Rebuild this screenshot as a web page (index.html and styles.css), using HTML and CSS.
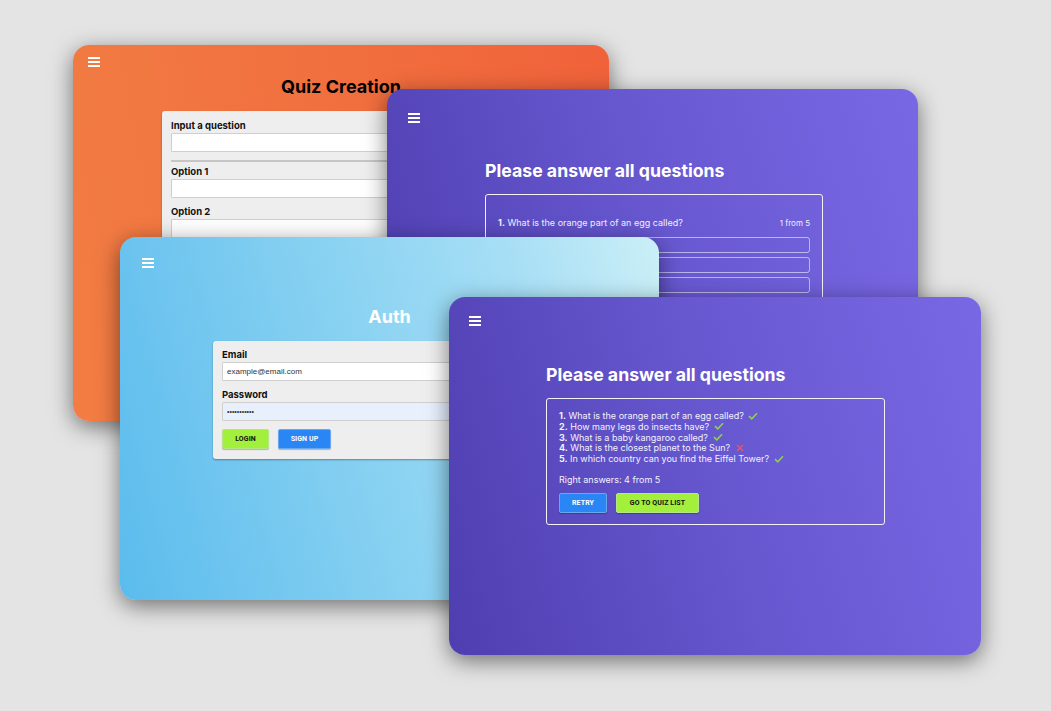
FILE: index.html
```html
<!DOCTYPE html>
<html lang="en">
<head>
<meta charset="utf-8">
<title>Quiz app screens</title>
<link rel="stylesheet" href="styles.css">
</head>
<body>
<div class="desk">

  <section class="win win-create">
    <svg class="burger" viewBox="0 0 12 10" width="12" height="10"><path d="M0 1h12M0 5h12M0 9h12" stroke="#fff" stroke-width="1.8"/></svg>
    <h1 class="title-dark">Quiz Creation</h1>
    <div class="form-card create-card">
      <label class="lbl">Input a question</label>
      <div class="inp"></div>
      <div class="divider"></div>
      <label class="lbl">Option 1</label>
      <div class="inp"></div>
      <label class="lbl lbl-gap">Option 2</label>
      <div class="inp"></div>
      <label class="lbl lbl-gap">Option 3</label>
      <div class="inp"></div>
    </div>
  </section>

  <section class="win win-purple win-answer">
    <svg class="burger" viewBox="0 0 12 10" width="12" height="10"><path d="M0 1h12M0 5h12M0 9h12" stroke="#fff" stroke-width="1.8"/></svg>
    <div class="content">
      <h2 class="title-light">Please answer all questions</h2>
      <div class="quiz-card q-card">
        <div class="q-row">
          <span class="q-text"><b>1.</b> What is the orange part of an egg called?</span>
          <span class="q-count">1 from 5</span>
        </div>
        <div class="opt"></div>
        <div class="opt"></div>
        <div class="opt"></div>
        <div class="opt"></div>
      </div>
    </div>
  </section>

  <section class="win win-auth">
    <svg class="burger" viewBox="0 0 12 10" width="12" height="10"><path d="M0 1h12M0 5h12M0 9h12" stroke="#fff" stroke-width="1.8"/></svg>
    <h1 class="title-auth">Auth</h1>
    <div class="form-card auth-card">
      <label class="lbl">Email</label>
      <div class="inp inp-text">example@email.com</div>
      <label class="lbl lbl-gap2">Password</label>
      <div class="inp inp-auto inp-text">•••••••••••</div>
      <div class="btns">
        <span class="btn btn-green">LOGIN</span>
        <span class="btn btn-blue">SIGN UP</span>
      </div>
    </div>
  </section>

  <section class="win win-purple win-result">
    <svg class="burger" viewBox="0 0 12 10" width="12" height="10"><path d="M0 1h12M0 5h12M0 9h12" stroke="#fff" stroke-width="1.8"/></svg>
    <div class="content">
      <h2 class="title-light">Please answer all questions</h2>
      <div class="quiz-card r-card">
        <ul class="r-list">
          <li><b>1.</b> What is the orange part of an egg called? <svg class="mark" viewBox="0 0 10 8" width="10" height="8"><path d="M1 4.2L3.8 6.8L9 1.2" fill="none" stroke="#8ed14c" stroke-width="1.6"/></svg></li>
          <li><b>2.</b> How many legs do insects have? <svg class="mark" viewBox="0 0 10 8" width="10" height="8"><path d="M1 4.2L3.8 6.8L9 1.2" fill="none" stroke="#8ed14c" stroke-width="1.6"/></svg></li>
          <li><b>3.</b> What is a baby kangaroo called? <svg class="mark" viewBox="0 0 10 8" width="10" height="8"><path d="M1 4.2L3.8 6.8L9 1.2" fill="none" stroke="#8ed14c" stroke-width="1.6"/></svg></li>
          <li><b>4.</b> What is the closest planet to the Sun? <svg class="mark" viewBox="0 0 10 8" width="10" height="8"><path d="M2 1L8 7M8 1L2 7" fill="none" stroke="#e2566b" stroke-width="1.5"/></svg></li>
          <li><b>5.</b> In which country can you find the Eiffel Tower? <svg class="mark" viewBox="0 0 10 8" width="10" height="8"><path d="M1 4.2L3.8 6.8L9 1.2" fill="none" stroke="#8ed14c" stroke-width="1.6"/></svg></li>
        </ul>
        <p class="r-score">Right answers: 4 from 5</p>
        <div class="btns">
          <span class="btn btn-blue btn-retry">RETRY</span>
          <span class="btn btn-green btn-list">GO TO QUIZ LIST</span>
        </div>
      </div>
    </div>
  </section>

</div>
</body>
</html>
```

FILE: styles.css
```css
html, body {
  margin: 0;
  padding: 0;
}
body {
  background: #e4e4e4;
  font-family: Inter, "Noto Sans", sans-serif;
  width: 1051px;
  height: 711px;
  overflow: hidden;
}
.desk {
  position: relative;
  width: 1051px;
  height: 711px;
}
.win {
  position: absolute;
  border-radius: 16px;
  box-shadow: 0 6px 22px rgba(0, 0, 0, 0.5);
  overflow: hidden;
  box-sizing: border-box;
}
.burger {
  display: block;
}

/* Window 1: quiz creation */
.win-create {
  left: 73px;
  top: 45px;
  width: 536px;
  height: 376px;
  background: linear-gradient(80deg, #f27d43 0%, #f1703f 50%, #f0623a 100%);
  padding: 12px 0 0 15px;
}
.title-dark {
  margin: 8px 0 0 -15px;
  text-align: center;
  font-size: 18px;
  font-weight: 700;
  color: #000;
  line-height: 24px;
}
.form-card {
  background: #eeeeee;
  border-radius: 3px;
  box-shadow: 0 1px 2px rgba(0, 0, 0, 0.35);
  box-sizing: border-box;
  display: flex;
  flex-direction: column;
}
.create-card {
  width: 358px;
  margin: 12px 0 0 74px;
  padding: 9px 9px 10px;
}
.lbl {
  font-size: 9.5px;
  font-weight: 700;
  color: #111;
  line-height: 12px;
}
.lbl-gap {
  margin-top: 8px;
}
.inp {
  height: 19px;
  margin-top: 1px;
  background: #fff;
  border: 1px solid #cfcfcf;
  box-sizing: border-box;
  border-radius: 1px;
}
.divider {
  height: 2px;
  background: #c6c6c6;
  margin: 8px 0 4px;
}

/* Purple windows */
.win-purple {
  background: linear-gradient(75deg, #4e3eb0 0%, #6657cf 50%, #7968e4 100%);
}
.win-answer {
  left: 387px;
  top: 89px;
  width: 531px;
  height: 358px;
  padding: 24px 0 0 21px;
}
.win-result {
  left: 449px;
  top: 297px;
  width: 532px;
  height: 358px;
  padding: 19px 0 0 20px;
}
.content {
  display: flex;
  flex-direction: column;
}
.win-answer .content {
  margin-left: 77px;
  margin-top: 37px;
}
.win-result .content {
  margin-left: 77px;
  margin-top: 38px;
}
.title-light {
  margin: 0;
  font-size: 17.7px;
  font-weight: 700;
  color: #fff;
  line-height: 22px;
}
.quiz-card {
  border: 1.5px solid #f4f2ff;
  border-radius: 3px;
  box-sizing: border-box;
  margin-top: 12px;
  color: #f3f1ff;
}
.q-card {
  width: 338px;
  height: 140px;
  padding: 22px 12px 0;
}
.q-row {
  display: flex;
  justify-content: space-between;
  align-items: baseline;
  font-size: 9px;
}
.q-count {
  font-size: 8px;
}
.opt {
  height: 16px;
  border: 1.2px solid rgba(255, 255, 255, 0.55);
  border-radius: 3px;
  box-sizing: border-box;
  margin-top: 4px;
}
.q-row + .opt {
  margin-top: 9px;
}

.r-card {
  width: 339px;
  height: 127px;
  padding: 12px 12px 0;
}
.r-list {
  list-style: none;
  margin: 0;
  padding: 0;
  font-size: 9px;
  line-height: 10.75px;
}
.mark {
  margin-left: 2px;
  vertical-align: -0.5px;
}
.r-score {
  margin: 9px 0 0;
  font-size: 9px;
  line-height: 12px;
}
.btns {
  display: flex;
  gap: 9px;
}
.r-card .btns {
  margin-top: 7px;
}
.btn {
  display: flex;
  align-items: center;
  justify-content: center;
  height: 20px;
  box-sizing: border-box;
  border-radius: 2px;
  font-size: 7px;
  font-weight: 700;
  font-family: Roboto, Inter, sans-serif;
  letter-spacing: 0.1px;
  box-shadow: 0 1px 1px rgba(0, 0, 0, 0.25);
}
.btn-green {
  background: #a2ef3c;
  color: #111;
  border: 1px solid #b7e58a;
}
.btn-blue {
  background: #2a86f5;
  color: #fff;
  border: 1px solid #6aa8ee;
}
.btn-retry {
  width: 48px;
}
.btn-list {
  width: 83px;
}

/* Window 3: auth */
.win-auth {
  left: 120px;
  top: 237px;
  width: 539px;
  height: 363px;
  background: linear-gradient(75deg, #5bbced 0%, #8cd3f2 50%, #a6def5 75%, #cbeff7 100%);
  padding: 21px 0 0 22px;
}
.title-auth {
  margin: 37px 0 0 -22px;
  text-align: center;
  font-size: 18px;
  font-weight: 700;
  color: #fff;
  line-height: 24px;
}
.auth-card {
  width: 354px;
  margin: 12px 0 0 71px;
  padding: 8px 9px 10px;
}
.inp-text {
  font-size: 8px;
  color: #333;
  display: flex;
  align-items: center;
  padding-left: 4px;
  font-family: "Liberation Sans", Arial, sans-serif;
}
.inp-auto {
  background: #e8f0fe;
  font-size: 7px;
}
.lbl-gap2 {
  margin-top: 8px;
}
.auth-card .btns {
  margin-top: 8px;
}
.auth-card .btn-green {
  width: 47px;
}
.auth-card .btn-blue {
  width: 53px;
}
```
